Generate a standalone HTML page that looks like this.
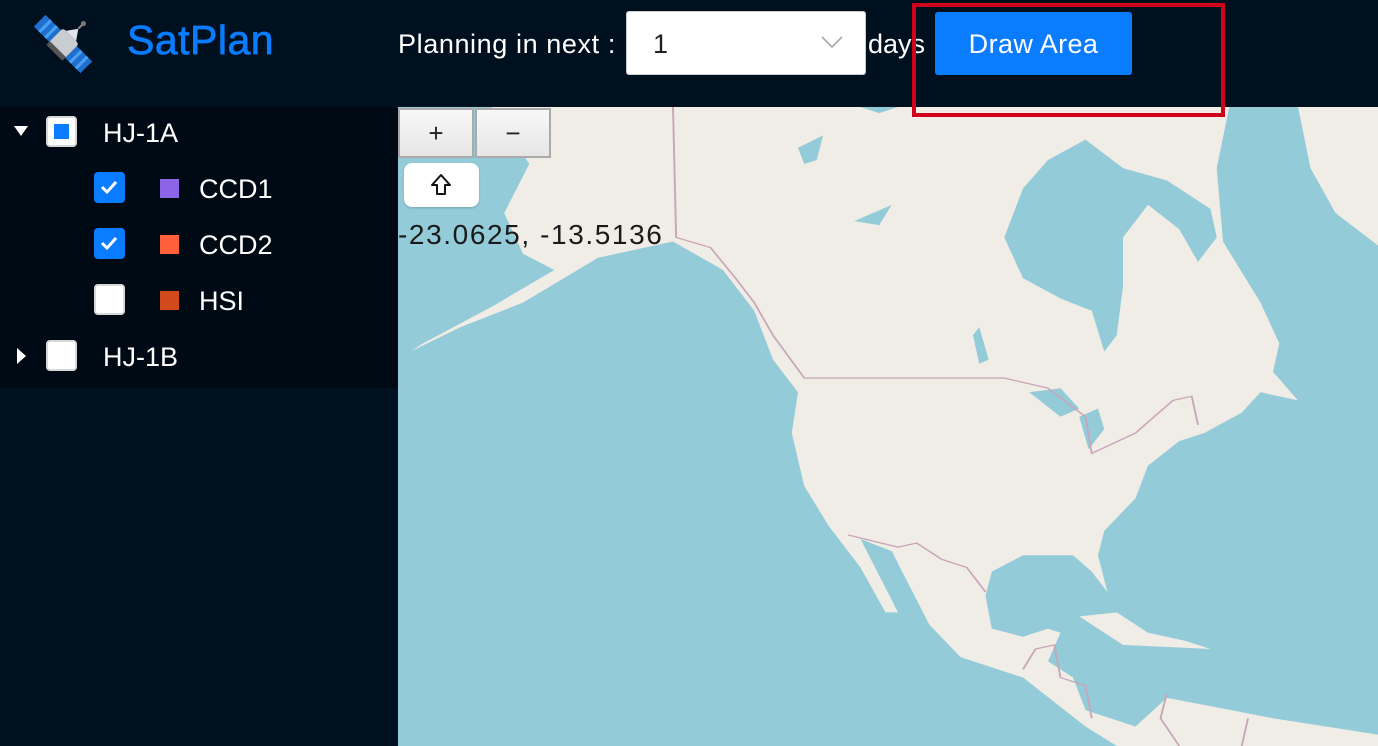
<!DOCTYPE html>
<html><head><meta charset="utf-8"><style>
*{margin:0;padding:0;box-sizing:border-box}
body{width:1378px;height:746px;overflow:hidden;background:#00101f;font-family:"Liberation Sans",sans-serif;position:relative}
.abs{position:absolute}
.hdr{left:0;top:0;width:1378px;height:107px;background:#00101f}
.side{left:0;top:107px;width:398px;height:281px;background:#000a14}
.row{position:absolute;color:#fff;font-size:27px;line-height:30px}
.cb{position:absolute;width:31px;height:31px;border-radius:4px;background:#fff;border:2px solid #d8d8d8}
.cbc{background:#0a7cff;border-color:#0a7cff}
.sw{position:absolute;width:19px;height:19px}
.zb{position:absolute;top:108px;width:76px;height:50px;background:linear-gradient(#f8f8f8,#e6e6e6);border:2px solid #aaa;font-size:26px;text-align:center;line-height:46px;color:#222}
</style></head><body>
<div class="abs hdr"></div>
<svg class="abs" style="left:29px;top:10px" width="68" height="68" viewBox="0 0 66 66">
<g transform="rotate(45 33 33)">
<rect x="1" y="25" width="21" height="16" fill="#1e6fd0"/><rect x="7" y="25" width="3" height="16" fill="#4aa0f0"/><rect x="15" y="25" width="3" height="16" fill="#4aa0f0"/>
<rect x="44" y="25" width="21" height="16" fill="#1e6fd0"/><rect x="49" y="25" width="3" height="16" fill="#4aa0f0"/><rect x="57" y="25" width="3" height="16" fill="#4aa0f0"/>
<rect x="22" y="22" width="22" height="22" rx="3" fill="#c8cdd2"/><rect x="22" y="40" width="22" height="5" fill="#555"/>
<path d="M26 22 L33 12 L40 22 Z" fill="#e0e4e8"/><line x1="33" y1="12" x2="33" y2="5" stroke="#888" stroke-width="2"/><circle cx="33" cy="5" r="2.5" fill="#777"/>
</g></svg>
<div class="abs" style="left:127px;top:17px;font-size:41px;color:#0a7cff;-webkit-text-stroke:0.7px #0a7cff;letter-spacing:0.5px">SatPlan</div>
<div class="abs" style="left:398px;top:29px;font-size:27px;color:#fff;letter-spacing:0.6px">Planning in next :</div>
<div class="abs" style="left:626px;top:11px;width:240px;height:64px;background:#fff;border:1px solid #ccc;border-radius:3px"></div>
<div class="abs" style="left:653px;top:29px;font-size:27px;color:#222">1</div>
<svg class="abs" style="left:820px;top:35px" width="24" height="14"><path d="M2 2 L12 12 L22 2" fill="none" stroke="#aaa" stroke-width="1.6"/></svg>
<div class="abs" style="left:868px;top:29px;font-size:27px;color:#fff">days</div>
<div class="abs" style="left:935px;top:12px;width:197px;height:63px;background:#0a7cff;border-radius:3px;color:#fff;font-size:27px;text-align:center;line-height:65px;letter-spacing:0.4px">Draw Area</div>

<div class="abs side"></div>
<svg class="abs" style="left:14px;top:126px" width="14" height="12"><path d="M0 0 L14 0 L7 10 Z" fill="#fff"/></svg>
<div class="cb" style="left:46px;top:116px"><div style="position:absolute;left:6px;top:6px;width:15px;height:15px;background:#0a7cff"></div></div>
<div class="row" style="left:103px;top:118px">HJ-1A</div>
<div class="cb cbc" style="left:94px;top:172px"><svg width="27" height="27"><path d="M6 13 L11 18 L20 8" fill="none" stroke="#fff" stroke-width="3"/></svg></div>
<div class="sw" style="left:160px;top:179px;background:#8c64e8"></div>
<div class="row" style="left:199px;top:174px">CCD1</div>
<div class="cb cbc" style="left:94px;top:228px"><svg width="27" height="27"><path d="M6 13 L11 18 L20 8" fill="none" stroke="#fff" stroke-width="3"/></svg></div>
<div class="sw" style="left:160px;top:235px;background:#ff5f3a"></div>
<div class="row" style="left:199px;top:230px">CCD2</div>
<div class="cb" style="left:94px;top:284px"></div>
<div class="sw" style="left:160px;top:291px;background:#d04a1c"></div>
<div class="row" style="left:199px;top:286px">HSI</div>
<svg class="abs" style="left:17px;top:348px" width="10" height="16"><path d="M0 0 L9 8 L0 16 Z" fill="#fff"/></svg>
<div class="cb" style="left:46px;top:340px"></div>
<div class="row" style="left:103px;top:342px">HJ-1B</div>

<svg class="abs" style="left:398px;top:107px" width="980" height="639" viewBox="0 0 1568 1568" preserveAspectRatio="none">
<rect width="1568" height="1568" fill="#94cbd8"/>
<path fill="#f0ece6" d="M150,0 L1330,0 L1310,150 L1320,330 L1380,480 L1410,580 L1400,650 L1440,720 L1380,700 L1350,750 L1290,800 L1250,820 L1200,880 L1180,960 L1130,1040 L1120,1100 L1135,1190 L1110,1140 L1080,1100 L1000,1100 L950,1140 L940,1200 L950,1280 L1000,1300 L1040,1280 L1060,1290 L1040,1360 L1080,1400 L1100,1480 L1180,1520 L1230,1450 L1300,1470 L1400,1500 L1568,1540 L1568,1568 L1150,1568 L1100,1520 L1000,1400 L900,1350 L850,1270 L790,1090 L740,1060 L800,1240 L780,1240 L740,1130 L690,1030 L650,930 L630,800 L640,700 L600,620 L570,500 L520,400 L440,330 L320,370 L200,480 L100,540 L20,600 L40,580 L150,490 L250,400 L200,360 L170,260 L210,140 Z"/>
<path fill="#94cbd8" d="M1000,200 L970,320 L1000,420 L1060,470 L1110,500 L1130,600 L1150,560 L1160,440 L1160,320 L1200,240 L1250,300 L1280,380 L1310,320 L1300,250 L1230,180 L1160,150 L1100,80 L1040,130 Z"/>
<path fill="#94cbd8" d="M740,0 L770,15 L800,0 Z M640,100 L680,70 L670,130 L650,140 Z M730,280 L790,240 L770,290 Z M1010,700 L1060,690 L1090,740 L1060,760 Z M1090,760 L1120,740 L1130,790 L1105,840 Z M920,560 L930,540 L945,620 L930,630 Z"/>
<path fill="#f0ece6" d="M1440,0 L1460,150 L1500,260 L1568,340 L1568,0 Z M1090,1250 L1150,1240 L1200,1290 L1260,1310 L1300,1330 L1160,1320 Z"/>
<g fill="none" stroke="#c8a5b8" stroke-width="3">
<path d="M440,0 L445,320 L500,345 L540,420 L570,480 L600,560 L650,665 L970,665 L1040,690 L1100,760 L1110,850 L1180,800 L1240,720 L1270,710 L1280,780"/>
<path d="M720,1050 L800,1080 L830,1070 L870,1110 L910,1130 L940,1190"/>
<path d="M1000,1380 L1020,1330 L1050,1320 L1060,1400 L1100,1420 L1110,1500 M1230,1440 L1220,1500 L1250,1568 M1360,1500 L1350,1568"/>
</g>
</svg>
<div class="abs" style="left:912px;top:3px;width:313px;height:114px;border:4px solid #d0021b"></div>
<div class="zb" style="left:398px">+</div>
<div class="zb" style="left:475px">−</div>
<div class="abs" style="left:404px;top:163px;width:75px;height:44px;background:#fff;border-radius:8px;box-shadow:0 1px 2px rgba(0,0,0,.2)">
<svg width="75" height="44"><path d="M37 12 L46 22 L41 22 L41 31 L33 31 L33 22 L28 22 Z" fill="none" stroke="#111" stroke-width="2" stroke-linejoin="round"/></svg></div>
<div class="abs" style="left:398px;top:219px;font-size:28px;color:#1a1a1a;letter-spacing:1.6px">-23.0625, -13.5136</div>
</body></html>
